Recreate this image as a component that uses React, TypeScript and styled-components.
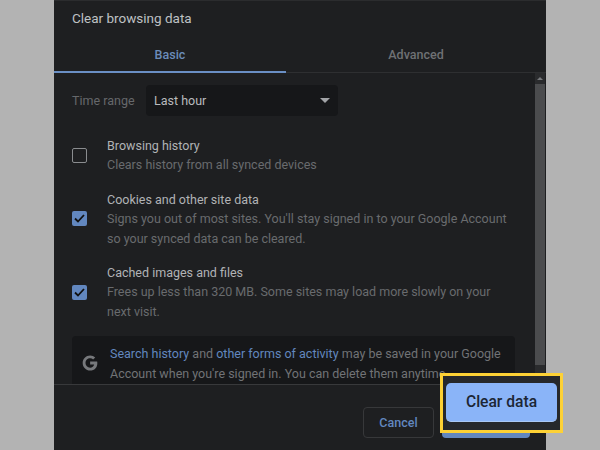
import styled, { createGlobalStyle } from 'styled-components'

const GlobalStyle = createGlobalStyle`
  html, body {
    margin: 0;
    padding: 0;
    height: 450px;
    overflow: hidden;
    background: #b3b3b3;
    font-family: Roboto, "Liberation Sans", sans-serif;
  }
`

const Page = styled.div`
  position: relative;
  width: 600px;
  height: 450px;
  padding-left: 54px;
  box-sizing: border-box;
  overflow: hidden;
`

const Dialog = styled.div`
  display: flex;
  flex-direction: column;
  width: 492px;
  height: 450px;
  background: #1e1f21;
  border-top: 1px solid #2b2c2e;
  box-sizing: border-box;
`

const Title = styled.h2`
  margin: 0;
  height: 36px;
  padding: 7px 0 0 18px;
  box-sizing: border-box;
  font-size: 13.5px;
  line-height: 20px;
  font-weight: 400;
  color: #bfc1c4;
`

const Tabs = styled.div`
  display: grid;
  grid-template-columns: 232px 260px;
  height: 35px;
  border-bottom: 1px solid #2e2f31;
`

const Tab = styled.div<{ $active?: boolean }>`
  display: flex;
  align-items: center;
  justify-content: center;
  height: 36px;
  padding-bottom: ${p => (p.$active ? 0 : '1px')};
  box-sizing: border-box;
  font-size: 12.5px;
  font-weight: 500;
  color: ${p => (p.$active ? '#6b8cba' : '#6f7174')};
  border-bottom: ${p => (p.$active ? '2px solid #6a8fc4' : 'none')};
`

const Body = styled.div`
  display: flex;
  height: 311px;
  overflow: hidden;
`

const Content = styled.div`
  flex: 1;
  min-width: 0;
  padding: 12px 0 0 18px;
  overflow: hidden;
`

const RangeRow = styled.div`
  display: flex;
  align-items: center;
  gap: 10px;
  height: 31px;
  margin-bottom: 20px;
`

const RangeLabel = styled.span`
  width: 64px;
  font-size: 12.5px;
  color: #66686b;
`

const Select = styled.div`
  display: flex;
  align-items: center;
  justify-content: space-between;
  width: 192px;
  height: 31px;
  padding: 0 8px;
  box-sizing: border-box;
  background: #161719;
  border-radius: 4px;
  font-size: 12.5px;
  color: #b9bbbe;
`

const Caret = styled.span`
  width: 0;
  height: 0;
  border-left: 5px solid transparent;
  border-right: 5px solid transparent;
  border-top: 5px solid #a2a4a7;
`

const OptionRow = styled.div<{ $gap: number }>`
  display: flex;
  align-items: center;
  gap: 20px;
  width: 440px;
  margin-bottom: ${p => p.$gap}px;
`

const Box = styled.span<{ $checked?: boolean }>`
  display: flex;
  align-items: center;
  justify-content: center;
  flex: none;
  width: 15px;
  height: 15px;
  box-sizing: border-box;
  border-radius: 2px;
  background: ${p => (p.$checked ? '#6287bf' : 'transparent')};
  border: ${p => (p.$checked ? 'none' : '1.5px solid #8a8c8f')};
`

const OptionTitle = styled.div`
  font-size: 12.5px;
  line-height: 19.4px;
  color: #b1b3b6;
`

const OptionText = styled.div`
  font-size: 12.5px;
  line-height: 19.4px;
  color: #696b6e;
`

const Notice = styled.div`
  display: flex;
  align-items: flex-start;
  gap: 12px;
  width: 443px;
  height: 70px;
  margin-top: 15px;
  padding: 8px 0 0 10px;
  box-sizing: border-box;
  background: #161719;
  border-radius: 4px;
`

const GoogleIcon = styled.svg`
  flex: none;
  width: 16px;
  height: 16px;
  margin-top: 11px;
`

const NoticeLine = styled.div`
  font-size: 12.5px;
  line-height: 19.4px;
  white-space: nowrap;
  color: #717376;
`

const NoticeLink = styled.span`
  color: #6287bf;
`

const Scrollbar = styled.div`
  display: flex;
  flex-direction: column;
  flex: none;
  width: 10px;
  margin-right: 1px;
  background: #2a2b2d;
`

const ScrollArrow = styled.div`
  display: flex;
  align-items: center;
  justify-content: center;
  height: 11px;
  &::before {
    content: '';
    border-left: 3px solid transparent;
    border-right: 3px solid transparent;
    border-bottom: 3px solid #77797c;
  }
`

const ScrollThumb = styled.div`
  height: 281px;
  background: #4b4c4e;
`

const Footer = styled.div`
  display: flex;
  justify-content: flex-end;
  gap: 8px;
  flex: 1;
  padding: 22px 16px 0 0;
  border-top: 1px solid #38393b;
`

const Button = styled.div<{ $primary?: boolean }>`
  display: flex;
  align-items: center;
  justify-content: center;
  width: ${p => (p.$primary ? '88px' : '71px')};
  height: 31px;
  box-sizing: border-box;
  border-radius: 4px;
  font-size: 12.5px;
  font-weight: 500;
  color: #6287bf;
  background: ${p => (p.$primary ? '#6287bf' : 'transparent')};
  border: ${p => (p.$primary ? 'none' : '1px solid #37383a')};
`

const Highlight = styled.div`
  position: absolute;
  left: 440px;
  top: 373px;
  width: 123px;
  height: 60px;
  padding: 7px 3px 0;
  box-sizing: border-box;
  display: flex;
  justify-content: center;
  background: #26282b;
  border: 3px solid #fdd135;
`

const ClearButton = styled.div`
  display: flex;
  align-items: center;
  justify-content: center;
  width: 111px;
  height: 39px;
  box-sizing: border-box;
  border-radius: 5px;
  background: #8ab4f8;
  border-bottom: 1px solid #a9c8f5;
  font-size: 15.6px;
  font-weight: 500;
  color: #1c2635;
`

function Check() {
  return (
    <svg width="11" height="9" viewBox="0 0 11 9">
      <path d="M1 4.5 L4 7.5 L10 1" fill="none" stroke="#111" strokeWidth="1.8" />
    </svg>
  )
}

function App() {
  return (
    <>
      <GlobalStyle />
      <Page>
        <Dialog>
          <Title>Clear browsing data</Title>
          <Tabs>
            <Tab $active>Basic</Tab>
            <Tab>Advanced</Tab>
          </Tabs>
          <Body>
            <Content>
              <RangeRow>
                <RangeLabel>Time range</RangeLabel>
                <Select>
                  Last hour
                  <Caret />
                </Select>
              </RangeRow>
              <OptionRow $gap={15}>
                <Box />
                <div>
                  <OptionTitle>Browsing history</OptionTitle>
                  <OptionText>Clears history from all synced devices</OptionText>
                </div>
              </OptionRow>
              <OptionRow $gap={15}>
                <Box $checked>
                  <Check />
                </Box>
                <div>
                  <OptionTitle>Cookies and other site data</OptionTitle>
                  <OptionText>
                    Signs you out of most sites. You'll stay signed in to your Google Account so your synced data can be cleared.
                  </OptionText>
                </div>
              </OptionRow>
              <OptionRow $gap={0}>
                <Box $checked>
                  <Check />
                </Box>
                <div>
                  <OptionTitle>Cached images and files</OptionTitle>
                  <OptionText>
                    Frees up less than 320 MB. Some sites may load more slowly on your next visit.
                  </OptionText>
                </div>
              </OptionRow>
              <Notice>
                <GoogleIcon viewBox="0 0 24 24">
                  <path
                    d="M12.2 9.800v4.300h6c-.5 2.800-2.900 4.900-6 4.900-3.800 0-6.900-3.100-6.900-7s3.100-7 6.900-7c1.800 0 3.300.6 4.500 1.700l3.100-3.100C17.800 1.800 15.200.7 12.200.7 6 .7 1 5.800 1 12s5 11.300 11.200 11.300c6.500 0 10.800-4.500 10.800-11 0-.9-.1-1.700-.3-2.500z"
                    fill="#77797c"
                  />
                </GoogleIcon>
                <div>
                  <NoticeLine>
                    <NoticeLink>Search history</NoticeLink> and <NoticeLink>other forms of activity</NoticeLink> may be saved in your Google
                  </NoticeLine>
                  <NoticeLine>Account when you're signed in. You can delete them anytime.</NoticeLine>
                </div>
              </Notice>
            </Content>
            <Scrollbar>
              <ScrollArrow />
              <ScrollThumb />
            </Scrollbar>
          </Body>
          <Footer>
            <Button>Cancel</Button>
            <Button $primary>Clear data</Button>
          </Footer>
        </Dialog>
        <Highlight>
          <ClearButton>Clear data</ClearButton>
        </Highlight>
      </Page>
    </>
  )
}

export default App
